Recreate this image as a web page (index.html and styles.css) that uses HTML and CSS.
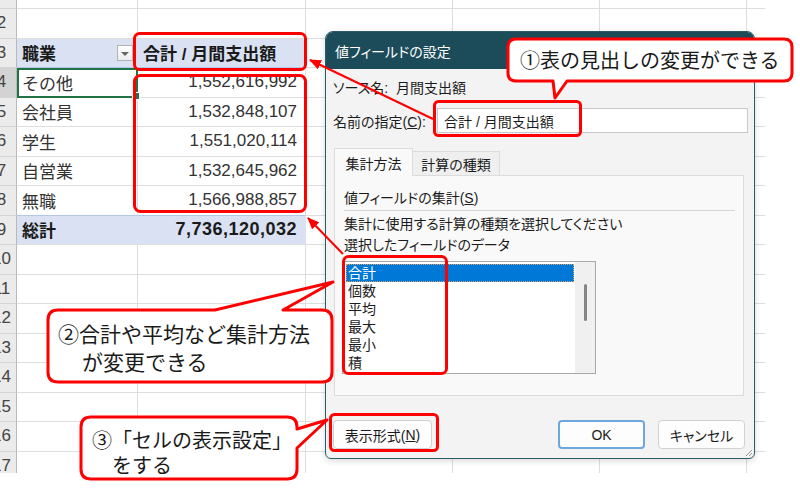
FILE: index.html
```html
<!DOCTYPE html>
<html lang="ja">
<head>
<meta charset="utf-8">
<title>値フィールドの設定</title>
<link rel="stylesheet" href="styles.css">
</head>
<body>
<div class="page">
  <div class="sheet">
    <div class="r top"><div class="rh"></div><div class="c a"></div><div class="c b"></div><div class="c x"></div><div class="c x"></div><div class="c x"></div><div class="c e"></div></div>
    <div class="r"><div class="rh"><span>2</span></div><div class="c a"></div><div class="c b"></div><div class="c x"></div><div class="c x"></div><div class="c x"></div><div class="c e"></div></div>
    <div class="r hdr"><div class="rh"><span>3</span></div><div class="c a">職業<span class="dd"><i></i></span></div><div class="c b">合計 / 月間支出額</div><div class="c x"></div><div class="c x"></div><div class="c x"></div><div class="c e"></div></div>
    <div class="r"><div class="rh on"><span>4</span></div><div class="c a sel">その他</div><div class="c b">1,552,616,992</div><div class="c x"></div><div class="c x"></div><div class="c x"></div><div class="c e"></div></div>
    <div class="r"><div class="rh"><span>5</span></div><div class="c a">会社員</div><div class="c b">1,532,848,107</div><div class="c x"></div><div class="c x"></div><div class="c x"></div><div class="c e"></div></div>
    <div class="r"><div class="rh"><span>6</span></div><div class="c a">学生</div><div class="c b">1,551,020,114</div><div class="c x"></div><div class="c x"></div><div class="c x"></div><div class="c e"></div></div>
    <div class="r"><div class="rh"><span>7</span></div><div class="c a">自営業</div><div class="c b">1,532,645,962</div><div class="c x"></div><div class="c x"></div><div class="c x"></div><div class="c e"></div></div>
    <div class="r pre"><div class="rh"><span>8</span></div><div class="c a">無職</div><div class="c b">1,566,988,857</div><div class="c x"></div><div class="c x"></div><div class="c x"></div><div class="c e"></div></div>
    <div class="r tot"><div class="rh"><span>9</span></div><div class="c a">総計</div><div class="c b">7,736,120,032</div><div class="c x"></div><div class="c x"></div><div class="c x"></div><div class="c e"></div></div>
    <div class="r"><div class="rh"><span>10</span></div><div class="c a"></div><div class="c b"></div><div class="c x"></div><div class="c x"></div><div class="c x"></div><div class="c e"></div></div>
    <div class="r"><div class="rh"><span>11</span></div><div class="c a"></div><div class="c b"></div><div class="c x"></div><div class="c x"></div><div class="c x"></div><div class="c e"></div></div>
    <div class="r"><div class="rh"><span>12</span></div><div class="c a"></div><div class="c b"></div><div class="c x"></div><div class="c x"></div><div class="c x"></div><div class="c e"></div></div>
    <div class="r"><div class="rh"><span>13</span></div><div class="c a"></div><div class="c b"></div><div class="c x"></div><div class="c x"></div><div class="c x"></div><div class="c e"></div></div>
    <div class="r"><div class="rh"><span>14</span></div><div class="c a"></div><div class="c b"></div><div class="c x"></div><div class="c x"></div><div class="c x"></div><div class="c e"></div></div>
    <div class="r"><div class="rh"><span>15</span></div><div class="c a"></div><div class="c b"></div><div class="c x"></div><div class="c x"></div><div class="c x"></div><div class="c e"></div></div>
    <div class="r"><div class="rh"><span>16</span></div><div class="c a"></div><div class="c b"></div><div class="c x"></div><div class="c x"></div><div class="c x"></div><div class="c e"></div></div>
    <div class="r"><div class="rh"><span>17</span></div><div class="c a"></div><div class="c b"></div><div class="c x"></div><div class="c x"></div><div class="c x"></div><div class="c e"></div></div>
  </div>

  <div class="dialog">
    <div class="title">値フィールドの設定</div>
    <div class="dbody">
      <div class="src"><span class="lbl">ソース名:</span><span>月間支出額</span></div>
      <div class="name"><span class="lbl">名前の指定(<u>C</u>):</span><div class="inp">合計 / 月間支出額</div></div>
      <div class="tabs"><div class="tab on">集計方法</div><div class="tab off">計算の種類</div></div>
      <div class="panel">
        <div class="ptitle">値フィールドの集計(<u>S</u>)</div>
        <div class="sep"></div>
        <div class="desc first">集計に使用する計算の種類を選択してください</div>
        <div class="desc">選択したフィールドのデータ</div>
        <div class="list">
          <div class="items">
            <div class="item on">合計</div>
            <div class="item">個数</div>
            <div class="item">平均</div>
            <div class="item">最大</div>
            <div class="item">最小</div>
            <div class="item">積</div>
          </div>
          <div class="scroll"><div class="thumb"></div></div>
        </div>
      </div>
      <div class="btns">
        <div class="btn fmt">表示形式(<u>N</u>)</div>
        <div class="btn ok">OK</div>
        <div class="btn cancel">キャンセル</div>
      </div>
    </div>
    <svg class="grip" width="8" height="8" viewBox="0 0 8 8"><path d="M7 1 L1 7 M7 4 L4 7" stroke="#9a9a9a" stroke-width="1"/></svg>
  </div>

  <svg class="marks" width="800" height="500" viewBox="0 0 800 500">
    <defs>
      <marker id="ah" markerWidth="6" markerHeight="5" refX="5.5" refY="2.5" orient="auto" markerUnits="strokeWidth">
        <path d="M0 0 L6 2.5 L0 5 Z" fill="#f00"/>
      </marker>
    </defs>
    <g fill="none" stroke="#f00" stroke-width="3">
      <rect x="134.5" y="33.5" width="171" height="36" rx="5"/>
      <rect x="134.5" y="75.5" width="171" height="136" rx="6"/>
      <rect x="434.5" y="101.5" width="146" height="34" rx="4"/>
      <rect x="343.5" y="256.5" width="103" height="117" rx="5"/>
      <rect x="330.5" y="414.5" width="107" height="36" rx="4"/>
    </g>
    <g stroke="#f00" stroke-width="2" fill="none">
      <line x1="433" y1="119" x2="310" y2="60" marker-end="url(#ah)"/>
      <line x1="343" y1="254" x2="308" y2="218" marker-end="url(#ah)"/>
    </g>
    <g fill="#fff" stroke="#f00" stroke-width="3" stroke-linejoin="round">
      <path d="M516 39 H784 Q792 39 792 47 V73 Q792 81 784 81 H567 L555 98 L553 81 H516 Q508 81 508 73 V47 Q508 39 516 39 Z"/>
      <path d="M58 310 H215 L333 282 L283 310 H322 Q332 310 332 320 V372 Q332 382 322 382 H58 Q48 382 48 372 V320 Q48 310 58 310 Z"/>
      <path d="M91 417 H287 Q297 417 297 427 V429 L327 420 L297 448 V469 Q297 479 287 479 H91 Q81 479 81 469 V427 Q81 417 91 417 Z"/>
    </g>
  </svg>

  <div class="note n1">①表の見出しの変更ができる</div>
  <div class="note n2">②合計や平均など集計方法<br>が変更できる</div>
  <div class="note n3">③「セルの表示設定」<br>をする</div>
</div>
</body>
</html>
```

FILE: styles.css
```css
* { box-sizing: border-box; }
html, body { margin: 0; background: #fff; }
body {
  width: 800px;
  height: 500px;
  overflow: hidden;
  font-family: "Liberation Sans", "Noto Sans CJK JP", sans-serif;
}
.page { position: relative; width: 800px; height: 500px; }

/* spreadsheet */
.sheet {
  width: 765px;
  height: 473px;
  overflow: hidden;
  display: flex;
  flex-direction: column;
}
.r { display: flex; height: 29.5px; flex: none; }
.r.top { height: 9px; }
.rh {
  width: 17px;
  flex: none;
  background: #ebebeb;
  border-right: 1px solid #b9b9b9;
  border-bottom: 1px solid #d4d4d4;
  overflow: hidden;
  display: flex;
  align-items: center;
  font-size: 17px;
  color: #444;
}
.rh.on { background: #d3d3d3; }
.rh span { width: 31px; margin-left: -14px; text-align: center; flex: none; }
.c {
  flex: none;
  border-right: 1px solid #dedede;
  border-bottom: 1px solid #dedede;
  display: flex;
  align-items: center;
  font-size: 17px;
  color: #333;
  padding: 0 5px;
  white-space: nowrap;
}
.a { width: 121px; }
.b { width: 168px; justify-content: flex-end; padding-right: 8px; }
.x { width: 147px; }
.e { width: 18px; border-right: none; }

.hdr .a, .hdr .b, .tot .a, .tot .b {
  background: #d9e1f2;
  border-right-color: #d9e1f2;
  font-weight: bold;
  color: #1a1a1a;
}
.hdr .a, .hdr .b { border-bottom-color: #b4c6e7; }
.hdr .a { justify-content: space-between; padding-right: 4px; }
.hdr .b { justify-content: flex-start; }
.pre .a, .pre .b { border-bottom-color: #b4c6e7; }
.tot .b { font-size: 18px; letter-spacing: 0.5px; padding-right: 8px; }

.dd {
  width: 16px;
  height: 16px;
  border: 1px solid #b3b3b3;
  background: linear-gradient(#ffffff, #ececec);
  display: flex;
  align-items: center;
  justify-content: center;
  padding-top: 3px;
}
.dd i {
  width: 0;
  height: 0;
  border-left: 4px solid transparent;
  border-right: 4px solid transparent;
  border-top: 4px solid #666;
}
.sel {
  outline: 2px solid #217346;
  outline-offset: -2px;
  position: relative;
}
.sel::after {
  content: "";
  position: absolute;
  right: -3px;
  bottom: -3px;
  width: 6px;
  height: 6px;
  background: #217346;
  border: 1px solid #fff;
}

/* dialog */
.dialog {
  position: absolute;
  left: 325px;
  top: 31px;
  width: 430px;
  height: 428px;
  border: 1px solid #2c5b68;
  border-radius: 8px 8px 6px 6px;
  background: #f3f3f3;
  overflow: hidden;
  display: flex;
  flex-direction: column;
  font-size: 14px;
  color: #1b1b1b;
  font-feature-settings: "palt";
  box-shadow: 0 2px 6px rgba(0, 0, 0, 0.15);
}
.title {
  height: 37px;
  flex: none;
  background: #1c4b5a;
  color: #fff;
  display: flex;
  align-items: center;
  padding-left: 9px;
}
.dbody { flex: 1; padding: 0 6px 0 7px; display: flex; flex-direction: column; }
.src { margin-top: 8px; height: 20px; display: flex; align-items: center; }
.src .lbl { width: 63px; }
.name { margin-top: 11px; height: 25px; display: flex; align-items: center; }
.name .lbl { width: 104px; flex: none; }
.inp {
  flex: 1;
  height: 25px;
  background: #fff;
  border: 1px solid #c8c8c8;
  display: flex;
  align-items: center;
  padding-left: 6px;
}
.tabs { margin-top: 15px; height: 27px; display: flex; align-items: flex-end; margin-left: 1px; }
.tab { display: flex; align-items: center; justify-content: center; }
.tab.on {
  width: 79px;
  height: 28px;
  margin-bottom: -1px;
  background: #f9f9f9;
  border: 1px solid #dcdcdc;
  border-bottom: none;
  position: relative;
  z-index: 1;
}
.tab.off {
  width: 87px;
  height: 24px;
  background: #efefef;
  border: 1px solid #dcdcdc;
  border-left: none;
  border-bottom: none;
}
.panel {
  width: 410px;
  height: 221px;
  margin-left: 1px;
  background: #f9f9f9;
  border: 1px solid #dcdcdc;
  padding: 12px 8px 0 9px;
}
.ptitle { height: 20px; line-height: 20px; }
.sep { height: 1px; background: #d5d5d5; margin-top: 2px; }
.desc { line-height: 21px; height: 21px; }
.desc.first { margin-top: 3px; }
.list {
  margin-top: 5px;
  margin-left: -2px;
  width: 254px;
  height: 113px;
  border: 1px solid #a9a9a9;
  background: #fff;
  display: flex;
}
.items { flex: 1; padding: 2px 1px 0 3px; }
.item { height: 18px; line-height: 18px; padding-left: 2px; }
.item.on { background: #0078d7; color: #fff; outline: 1px dotted #d9a066; outline-offset: -1px; }
.scroll { width: 20px; background: #f0f0f0; }
.thumb { width: 3px; height: 37px; background: #858585; border-radius: 2px; margin: 22px auto 0; }
.btns { margin-top: 24px; display: flex; height: 29px; margin-right: 3px; }
.btn {
  height: 29px;
  width: 87px;
  background: #fdfdfd;
  border: 1px solid #d1d1d1;
  border-radius: 4px;
  display: flex;
  align-items: center;
  justify-content: center;
}
.btn.fmt { width: 99px; margin-right: auto; }
.btn.ok { border: 2px solid #6ea7de; }
.btn.cancel { margin-left: 13px; }
.grip { position: absolute; right: 1px; bottom: 1px; }

/* annotations */
.marks { position: absolute; left: 0; top: 0; }
.note {
  position: absolute;
  font-family: "Noto Sans CJK JP", sans-serif;
  font-size: 20px;
  color: #1a1a1a;
  white-space: nowrap;
}
.n1 { left: 508px; top: 39px; width: 284px; height: 42px; line-height: 42px; padding-left: 12px; }
.n2 { left: 48px; top: 310px; width: 284px; height: 72px; line-height: 28px; padding: 9px 0 0 34px; text-indent: -24px; font-size: 21px; }
.n3 { left: 81px; top: 417px; width: 216px; height: 62px; line-height: 25px; padding: 10px 0 0 31px; text-indent: -20px; }
```
